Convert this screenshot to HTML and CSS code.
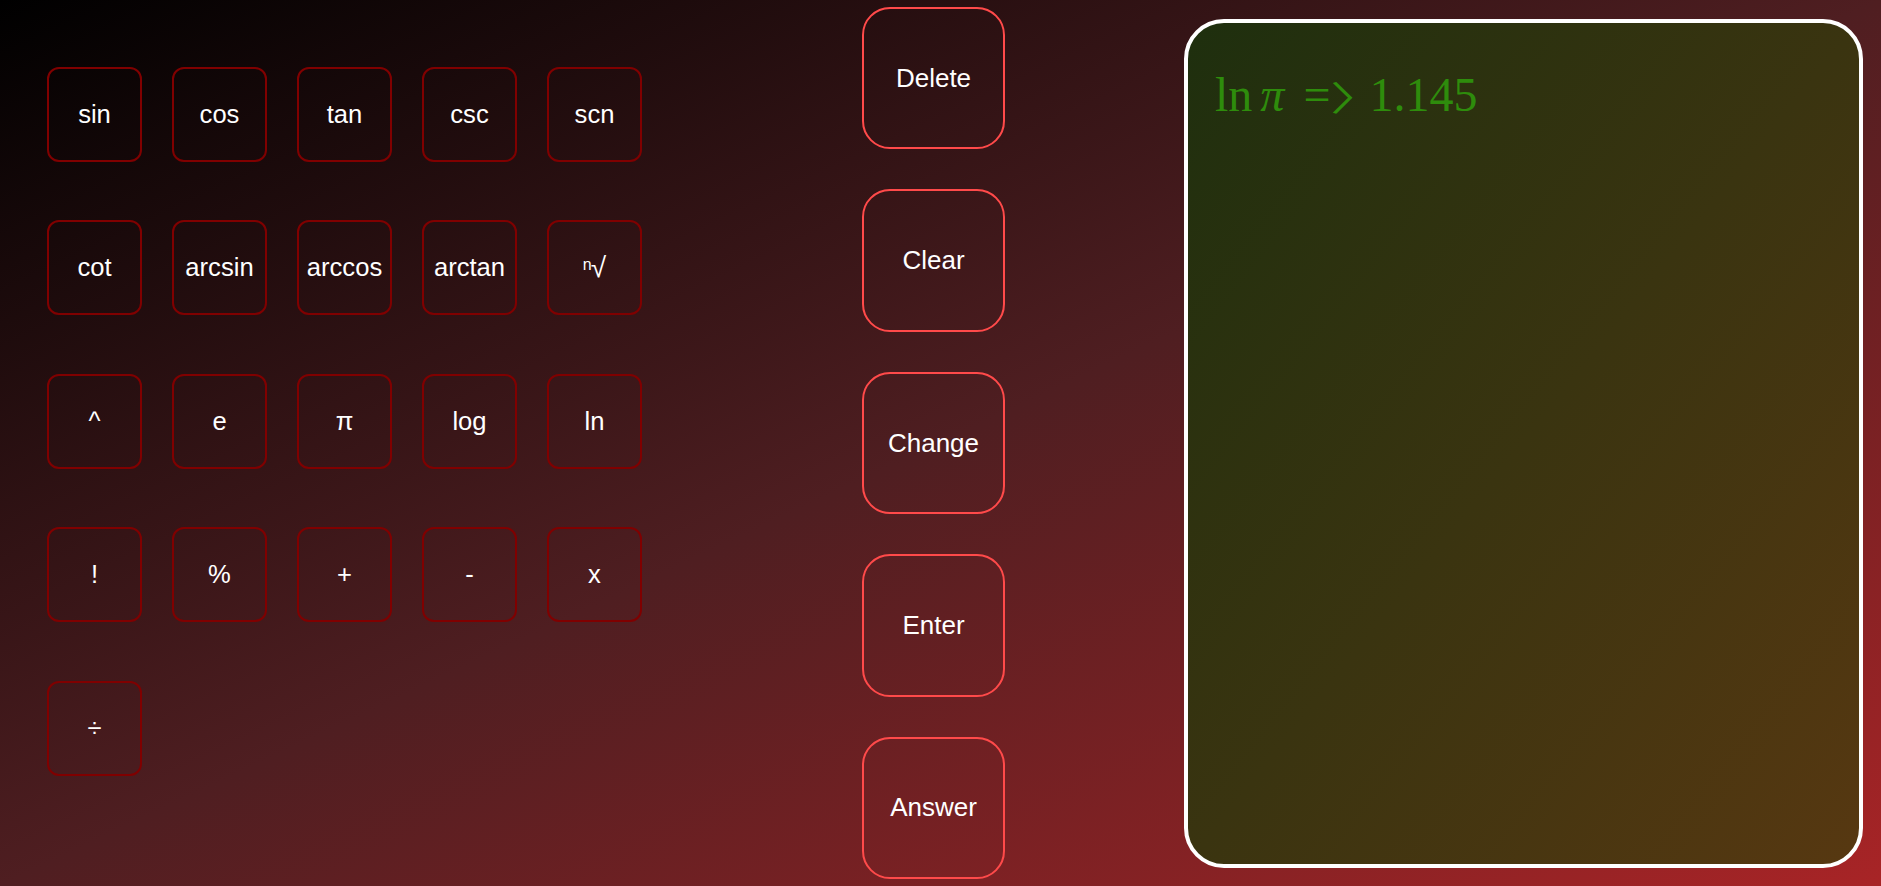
FILE: index.html
```html
<!DOCTYPE html>
<html lang="en">
<head>
<meta charset="utf-8">
<title>Calculator</title>
<link rel="stylesheet" href="styles.css">
</head>
<body>
<div class="page">
  <section class="keypad">
    <button class="key">sin</button>
    <button class="key">cos</button>
    <button class="key">tan</button>
    <button class="key">csc</button>
    <button class="key">scn</button>
    <button class="key">cot</button>
    <button class="key">arcsin</button>
    <button class="key">arccos</button>
    <button class="key">arctan</button>
    <button class="key"><span class="root-n">n</span><span class="root-sign">√</span></button>
    <button class="key">^</button>
    <button class="key">e</button>
    <button class="key">π</button>
    <button class="key">log</button>
    <button class="key">ln</button>
    <button class="key">!</button>
    <button class="key">%</button>
    <button class="key">+</button>
    <button class="key">-</button>
    <button class="key">x</button>
    <button class="key">÷</button>
  </section>
  <section class="controls">
    <button class="ctl">Delete</button>
    <button class="ctl">Clear</button>
    <button class="ctl">Change</button>
    <button class="ctl">Enter</button>
    <button class="ctl">Answer</button>
  </section>
  <section class="display">
    <div class="expr"><span class="fn">ln</span><span class="var">π</span><span class="eq">=</span><span class="arr-box"><span class="arr">〉</span></span><span class="num">1.145</span></div>
  </section>
</div>
</body>
</html>
```
FILE: styles.css
```css
html, body {
  margin: 0;
  padding: 0;
  height: 100%;
}

body {
  background: linear-gradient(to bottom right, #000000 0%, #4f1e21 50%, #a82426 100%);
  font-family: "Liberation Sans", Arial, sans-serif;
  overflow: hidden;
}

.page {
  display: flex;
  align-items: flex-start;
  height: 886px;
}

.keypad {
  display: grid;
  grid-template-columns: repeat(5, 95px);
  grid-auto-rows: 95px;
  column-gap: 30px;
  row-gap: 58.4px;
  padding: 67px 0 0 47px;
}

.key {
  box-sizing: border-box;
  width: 95px;
  height: 95px;
  padding: 0;
  border: 2px solid #800000;
  border-radius: 12px;
  background: transparent;
  color: #ffffff;
  font-family: "Liberation Sans", Arial, sans-serif;
  font-size: 25.6px;
  display: flex;
  align-items: center;
  justify-content: center;
}

.root-n {
  font-size: 16px;
  position: relative;
  top: -3px;
}

.root-sign {
  font-family: "Liberation Sans", sans-serif;
  font-size: 28px;
  display: inline-block;
  margin-left: -1px;
}

.controls {
  display: flex;
  flex-direction: column;
  gap: 39.8px;
  margin-left: 220px;
  padding-top: 6.7px;
}

.ctl {
  box-sizing: border-box;
  width: 143px;
  height: 142.7px;
  padding: 0;
  border: 2px solid #ff4a4a;
  border-radius: 28px;
  background: transparent;
  color: #ffffff;
  font-family: "Liberation Sans", Arial, sans-serif;
  font-size: 26px;
}

.display {
  box-sizing: border-box;
  margin-left: 179px;
  margin-top: 19px;
  width: 679px;
  height: 848.7px;
  border: 4px solid #ffffff;
  border-radius: 40px;
  background: linear-gradient(to bottom right, #1e2f0e 0%, #3a3410 50%, #573811 100%);
}

.expr {
  padding: 44px 0 0 27px;
  font-family: "Liberation Serif", "Times New Roman", serif;
  font-size: 48px;
  color: #2e8c0c;
  display: flex;
  align-items: baseline;
  white-space: nowrap;
}

.fn {
  margin-right: 8px;
}

.var {
  font-style: italic;
  margin-right: 19px;
}

.arr-box {
  display: inline-block;
  width: 39px;
}

.arr {
  font-family: "Noto Sans CJK JP", sans-serif;
  font-size: 34px;
  transform: scaleX(1.6);
  transform-origin: left center;
  display: inline-block;
  position: relative;
  top: 0;
}
```
